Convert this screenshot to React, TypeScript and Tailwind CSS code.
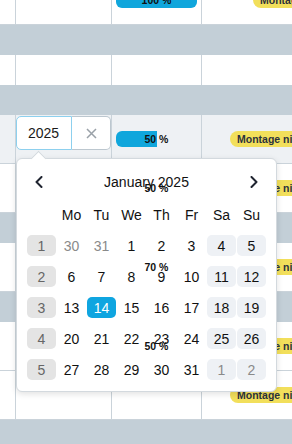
import React from "react";

const LINE = "border-[#cad3da]";

function Progress({ pct }: { pct: number }) {
  return (
    <div className="relative ml-[4px] flex h-[16px] w-[81px] items-center justify-center">
      <div className="absolute inset-0 overflow-hidden rounded-[6px]">
        <div className="h-full bg-[#10a6dc]" style={{ width: `${pct}%` }} />
      </div>
      <span className="relative z-20 text-[10.5px] font-bold leading-none text-[#111]">
        {pct} %
      </span>
    </div>
  );
}

function Badge({ ml }: { ml: string }) {
  return (
    <span
      className={`${ml} inline-block h-[16px] whitespace-nowrap rounded-full bg-[#f2df5b] pl-[7px] pr-[8px] text-[10.5px] font-bold leading-[16px] text-[#2c323c]`}
    >
      Montage nicht gestartet
    </span>
  );
}

function DataRow({
  bg = "bg-white",
  c1,
  c2,
  c3,
}: {
  bg?: string;
  c1?: React.ReactNode;
  c2?: React.ReactNode;
  c3?: React.ReactNode;
}) {
  return (
    <div className={`flex h-[49px] border-b ${LINE} ${bg}`}>
      <div className={`w-[16px] shrink-0 border-r ${LINE}`} />
      <div className={`relative w-[96px] shrink-0 border-r ${LINE}`}>{c1}</div>
      <div className={`flex w-[90px] shrink-0 items-center border-r ${LINE}`}>{c2}</div>
      <div className="flex flex-1 items-center">{c3}</div>
    </div>
  );
}

function Band() {
  return <div className="h-[30px] bg-[#c3cfd7]" />;
}

function EmptyRow() {
  return (
    <div className="flex h-[30px] bg-white">
      <div className={`w-[16px] shrink-0 border-r ${LINE}`} />
      <div className={`w-[96px] shrink-0 border-r ${LINE}`} />
      <div className={`w-[90px] shrink-0 border-r ${LINE}`} />
      <div className="flex-1" />
    </div>
  );
}

function Chevron({ dir }: { dir: "l" | "r" }) {
  return (
    <svg width="8" height="12" viewBox="0 0 8 12" fill="none">
      <polyline
        points={dir === "l" ? "6.5,1 1.5,6 6.5,11" : "1.5,1 6.5,6 1.5,11"}
        stroke="#1f2430"
        strokeWidth="2"
        strokeLinecap="round"
        strokeLinejoin="round"
      />
    </svg>
  );
}

type Day = { n: number; other?: boolean };

const weeks: { wk: number; days: Day[] }[] = [
  {
    wk: 1,
    days: [
      { n: 30, other: true },
      { n: 31, other: true },
      { n: 1 },
      { n: 2 },
      { n: 3 },
      { n: 4 },
      { n: 5 },
    ],
  },
  { wk: 2, days: [6, 7, 8, 9, 10, 11, 12].map((n) => ({ n })) },
  { wk: 3, days: [13, 14, 15, 16, 17, 18, 19].map((n) => ({ n })) },
  { wk: 4, days: [20, 21, 22, 23, 24, 25, 26].map((n) => ({ n })) },
  {
    wk: 5,
    days: [
      { n: 27 },
      { n: 28 },
      { n: 29 },
      { n: 30 },
      { n: 31 },
      { n: 1, other: true },
      { n: 2, other: true },
    ],
  },
];

function Calendar() {
  return (
    <div className="absolute left-0 top-[43px] z-10 w-[261px] rounded-[6px] border border-[#d3d9de] bg-white px-[10px] pb-[11px] pt-[9px] shadow-[0_2px_6px_rgba(0,0,0,0.12)]">
      <div className="absolute left-[16px] top-[-6px] h-[11px] w-[11px] rotate-45 border-l border-t border-[#d3d9de] bg-white" />
      <div className="flex h-[28px] items-center justify-between">
        <div className="flex w-[24px] justify-center">
          <Chevron dir="l" />
        </div>
        <span className="text-[14px] text-[#111]">January 2025</span>
        <div className="flex w-[24px] justify-center">
          <Chevron dir="r" />
        </div>
      </div>
      <div className="mt-[8px] grid grid-cols-[repeat(8,29px)] auto-rows-[21px] gap-x-[1px] gap-y-[10px] text-[14px] leading-none">
        <div />
        {["Mo", "Tu", "We", "Th", "Fr", "Sa", "Su"].map((d) => (
          <div key={d} className="flex items-center justify-center text-[#111]">
            {d}
          </div>
        ))}
        {weeks.map((w) => (
          <React.Fragment key={w.wk}>
            <div className="flex items-center justify-center rounded-[5px] bg-[#e4e4e4] text-[#666]">
              {w.wk}
            </div>
            {w.days.map((d, i) => {
              const weekend = i >= 5;
              const selected = !d.other && d.n === 14;
              const cls = selected
                ? "bg-[#0fa5e0] text-white"
                : weekend
                ? `bg-[#eef1f5] ${d.other ? "text-[#8a8a8a]" : "text-[#111]"}`
                : d.other
                ? "text-[#8a8a8a]"
                : "text-[#111]";
              return (
                <div
                  key={i}
                  className={`flex items-center justify-center rounded-[5px] ${cls}`}
                >
                  {d.n}
                </div>
              );
            })}
          </React.Fragment>
        ))}
      </div>
    </div>
  );
}

function DateInput() {
  return (
    <>
      <div className="mt-[1px] flex h-[34px] w-[95px]">
        <div className="flex w-[56px] items-center rounded-l-[5px] border border-[#8dd0ee] bg-white pl-[11px] text-[14px] text-[#1a1a1a]">
          2025
        </div>
        <div className="flex w-[39px] items-center justify-center rounded-r-[5px] border border-l-0 border-[#bcc7cf] bg-white">
          <svg width="11" height="11" viewBox="0 0 11 11">
            <path d="M1 1L10 10M10 1L1 10" stroke="#9aa1a8" strokeWidth="1.5" />
          </svg>
        </div>
      </div>
      <Calendar />
    </>
  );
}

export default function App() {
  return (
    <div className="h-[444px] w-[292px] overflow-hidden bg-white font-['Liberation_Sans',Arial,sans-serif]">
      <div className="-mt-[24px] w-[440px]">
        <DataRow c2={<Progress pct={100} />} c3={<Badge ml="ml-[51px]" />} />
        <Band />
        <EmptyRow />
        <Band />
        <DataRow
          bg="bg-[#eef1f4]"
          c1={<DateInput />}
          c2={<Progress pct={50} />}
          c3={<Badge ml="ml-[28px]" />}
        />
        <DataRow c2={<Progress pct={50} />} c3={<Badge ml="ml-[28px]" />} />
        <Band />
        <DataRow c2={<Progress pct={70} />} c3={<Badge ml="ml-[28px]" />} />
        <Band />
        <DataRow c2={<Progress pct={50} />} c3={<Badge ml="ml-[28px]" />} />
        <DataRow c3={<Badge ml="ml-[28px]" />} />
        <Band />
        <EmptyRow />
      </div>
    </div>
  );
}
